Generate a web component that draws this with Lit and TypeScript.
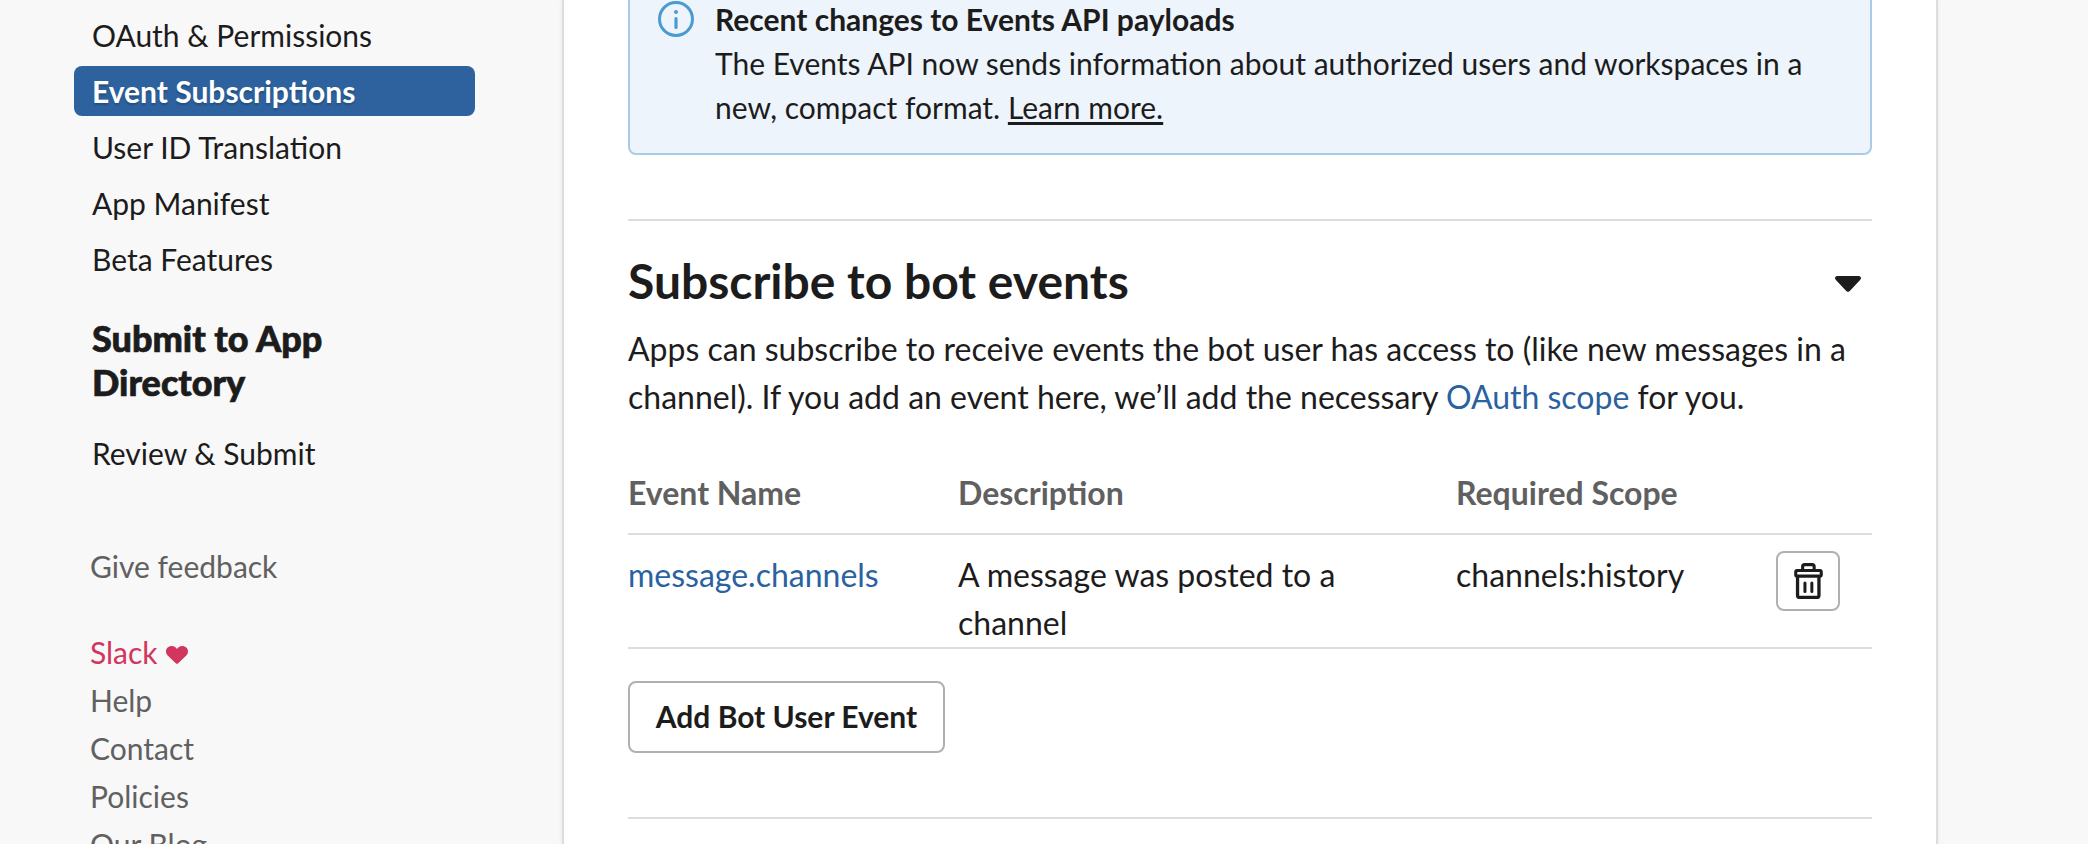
import { LitElement, html, css, svg } from "lit";
import { customElement } from "lit/decorators.js";
import { classMap } from "lit/directives/class-map.js";

const NAV = ["OAuth & Permissions", "Event Subscriptions", "User ID Translation", "App Manifest", "Beta Features"];
const FOOTER = ["Help", "Contact", "Policies", "Our Blog"];
const EVENTS = [
  { name: "message.channels", description: "A message was posted to a channel", scope: "channels:history" },
];

@customElement("side-nav")
class SideNav extends LitElement {
  static styles = css`
    :host { display: block; width: 402px; margin-left: 74px; font-size: 30px; }
    .item {
      display: block; height: 50px; line-height: 50px; margin-bottom: 6px;
      padding-left: 18px; border-radius: 8px; color: #1d1c1d; white-space: nowrap;
      width: 383px;
    }
    .active {
      background: #2d629e; color: #fff; font-weight: 700;
      text-shadow: 0 2px 2px rgba(0, 0, 0, 0.2);
    }
    .list { padding-top: 10px; }
    .heading {
      margin: 32px 0 24px; padding-left: 18px; width: 300px;
      font-family: "Lato Black", Lato, sans-serif;
      font-size: 36px; line-height: 44px; font-weight: 900; color: #1d1c1d;
      -webkit-text-stroke: 0.7px #1d1c1d;
    }
    .links { display: flex; flex-direction: column; padding-left: 16px; color: #616061; line-height: 48px; }
    .feedback { margin: 58px 0 38px; }
    .love { display: flex; align-items: center; gap: 8px; color: #d1365e; }
    .heart { display: block; margin-top: 6px; }
  `;
  render() {
    return html`
      <nav class="list">
        ${NAV.map((n, i) => html`<a class=${classMap({ item: true, active: i === 1 })}>${n}</a>`)}
      </nav>
      <h3 class="heading">Submit to App Directory</h3>
      <a class="item">Review &amp; Submit</a>
      <div class="links">
        <a class="feedback">Give feedback</a>
        <a class="love">Slack
          <svg class="heart" width="22" height="18" viewBox="0 0 22 19" preserveAspectRatio="none">
            <path fill="currentColor" d="M11 3.2C12.2 1.1 14 0 16.2 0 19.500 0 22 2.500 22 5.700c0 2-.8 3.500-2.200 4.900L12 18.400q-1 .9-2 0L2.200 10.600C.8 9.200 0 7.700 0 5.700 0 2.500 2.500 0 5.800 0 8 0 9.800 1.100 11 3.200z"/>
          </svg></a>
        ${FOOTER.map((n) => html`<a>${n}</a>`)}
      </div>`;
  }
}

@customElement("info-alert")
class InfoAlert extends LitElement {
  static styles = css`
    :host {
      display: flex; box-sizing: border-box; height: 175px; margin-top: -20px;
      border: 2px solid #a8cce6; border-radius: 8px; background: #edf4fb;
      padding: 15px 28px 0; font-size: 30px; line-height: 44px;
    }
    .icon { flex: none; width: 36px; height: 36px; margin: 4px 21px 0 0; }
    .title { display: block; font-weight: 700; }
    .more { text-decoration: underline; text-decoration-thickness: 3px; text-underline-offset: 3px; text-decoration-skip-ink: none; }
  `;
  render() {
    return html`
      <svg class="icon" viewBox="0 0 36 36" fill="none" stroke="#4a9bd1">
        <circle cx="18" cy="18" r="16.500" stroke-width="3"/>
        <path d="M18 17.600v8.900" stroke-width="3.200" stroke-linecap="round"/>
        <circle cx="18" cy="11" r="2" fill="#4a9bd1" stroke="none"/>
      </svg>
      <div>
        <strong class="title">Recent changes to Events API payloads</strong>
        The Events API now sends information about authorized users and workspaces in a new, compact format.
        <a class="more">Learn more.</a>
      </div>`;
  }
}

@customElement("events-table")
class EventsTable extends LitElement {
  static styles = css`
    :host { display: block; line-height: 48px; }
    .row { display: grid; grid-template-columns: 330px 498px 320px 1fr; border-bottom: 2px solid #ddd; }
    .head { height: 64px; color: #616061; font-weight: 700; }
    .body { padding-top: 16px; height: 96px; }
    .name { color: #2a629f; }
    .desc { width: 400px; }
    .trash {
      display: flex; align-items: center; justify-content: center; box-sizing: border-box;
      width: 64px; height: 60px; padding: 0; border: 2px solid #b0b0b0; border-radius: 8px; background: #fff;
    }
  `;
  render() {
    const bin = svg`
      <g fill="none" stroke="#1d1c1d" stroke-linejoin="round">
        <path d="M8.500 7V3.600q0-2 2-2h7.500q2 0 2 2V7" stroke-width="3.100"/>
        <rect x="1.600" y="7.500" width="25.500" height="5.600" rx="1.400" stroke-width="3.100"/>
        <path d="M3.400 13.500v18.700q0 2.200 2.200 2.200h17q2.200 0 2.200-2.200V13.500" stroke-width="3.300"/>
        <path d="M10.800 20v8.500M17.700 20v8.500" stroke-width="3" stroke-linecap="round"/>
      </g>`;
    return html`
      <div class="row head"><span>Event Name</span><span>Description</span><span>Required Scope</span></div>
      ${EVENTS.map((e) => html`
        <div class="row body">
          <a class="name">${e.name}</a><span class="desc">${e.description}</span><span>${e.scope}</span>
          <button class="trash" aria-label="Delete"><svg width="29" height="36" viewBox="0 0 28.700 36">${bin}</svg></button>
        </div>`)}`;
  }
}

@customElement("app-root")
class AppRoot extends LitElement {
  static styles = css`
    :host {
      display: flex; height: 844px; overflow: hidden; background: #f8f8f8; color: #1d1c1d;
      font-family: Lato, "Liberation Sans", sans-serif; font-size: 32px;
    }
    .side { flex: none; width: 562px; }
    .card {
      box-sizing: border-box; width: 1376px; height: 844px; padding: 0 64px; background: #fff;
      border: solid #ddd; border-width: 0 2px; box-shadow: 0 0 4px rgba(0, 0, 0, 0.08);
    }
    .section { margin-top: 64px; border-top: 2px solid #ddd; }
    .top { display: flex; justify-content: space-between; align-items: center; height: 60px; margin-top: 30px; padding-right: 11px; }
    .title { margin: 0; font-size: 48px; line-height: 60px; font-weight: 700; }
    .text { margin: 14px 0 48px; line-height: 48px; }
    .link { color: #2a629f; }
    .caret { display: block; margin-top: 6px; }
    .add {
      display: block; box-sizing: border-box; width: 317px; height: 72px; margin: 32px 0 64px; padding: 0 0 2px;
      border: 2px solid #b0b0b0; border-radius: 8px; background: #fff; color: #1d1c1d;
      font: 700 30px Lato, sans-serif;
    }
    .end { height: 2px; background: #ddd; }
  `;
  render() {
    return html`
      <aside class="side"><side-nav></side-nav></aside>
      <main class="card">
        <info-alert></info-alert>
        <section class="section">
          <div class="top">
            <h2 class="title">Subscribe to bot events</h2>
            <svg class="caret" width="26" height="16" viewBox="0 0 26 16">
              <path fill="#1d1c1d" d="M2.200 0h21.600c2 0 2.900 2.300 1.500 3.700L15 14.800q-2 2.200-4 0L.7 3.700C-.7 2.300.2 0 2.200 0z"/>
            </svg>
          </div>
          <p class="text">Apps can subscribe to receive events the bot user has access to (like new messages in a channel). If you add an event here, we’ll add the necessary <a class="link">OAuth scope</a> for you.</p>
          <events-table></events-table>
          <button class="add">Add Bot User Event</button>
        </section>
        <div class="end"></div>
      </main>`;
  }
}
